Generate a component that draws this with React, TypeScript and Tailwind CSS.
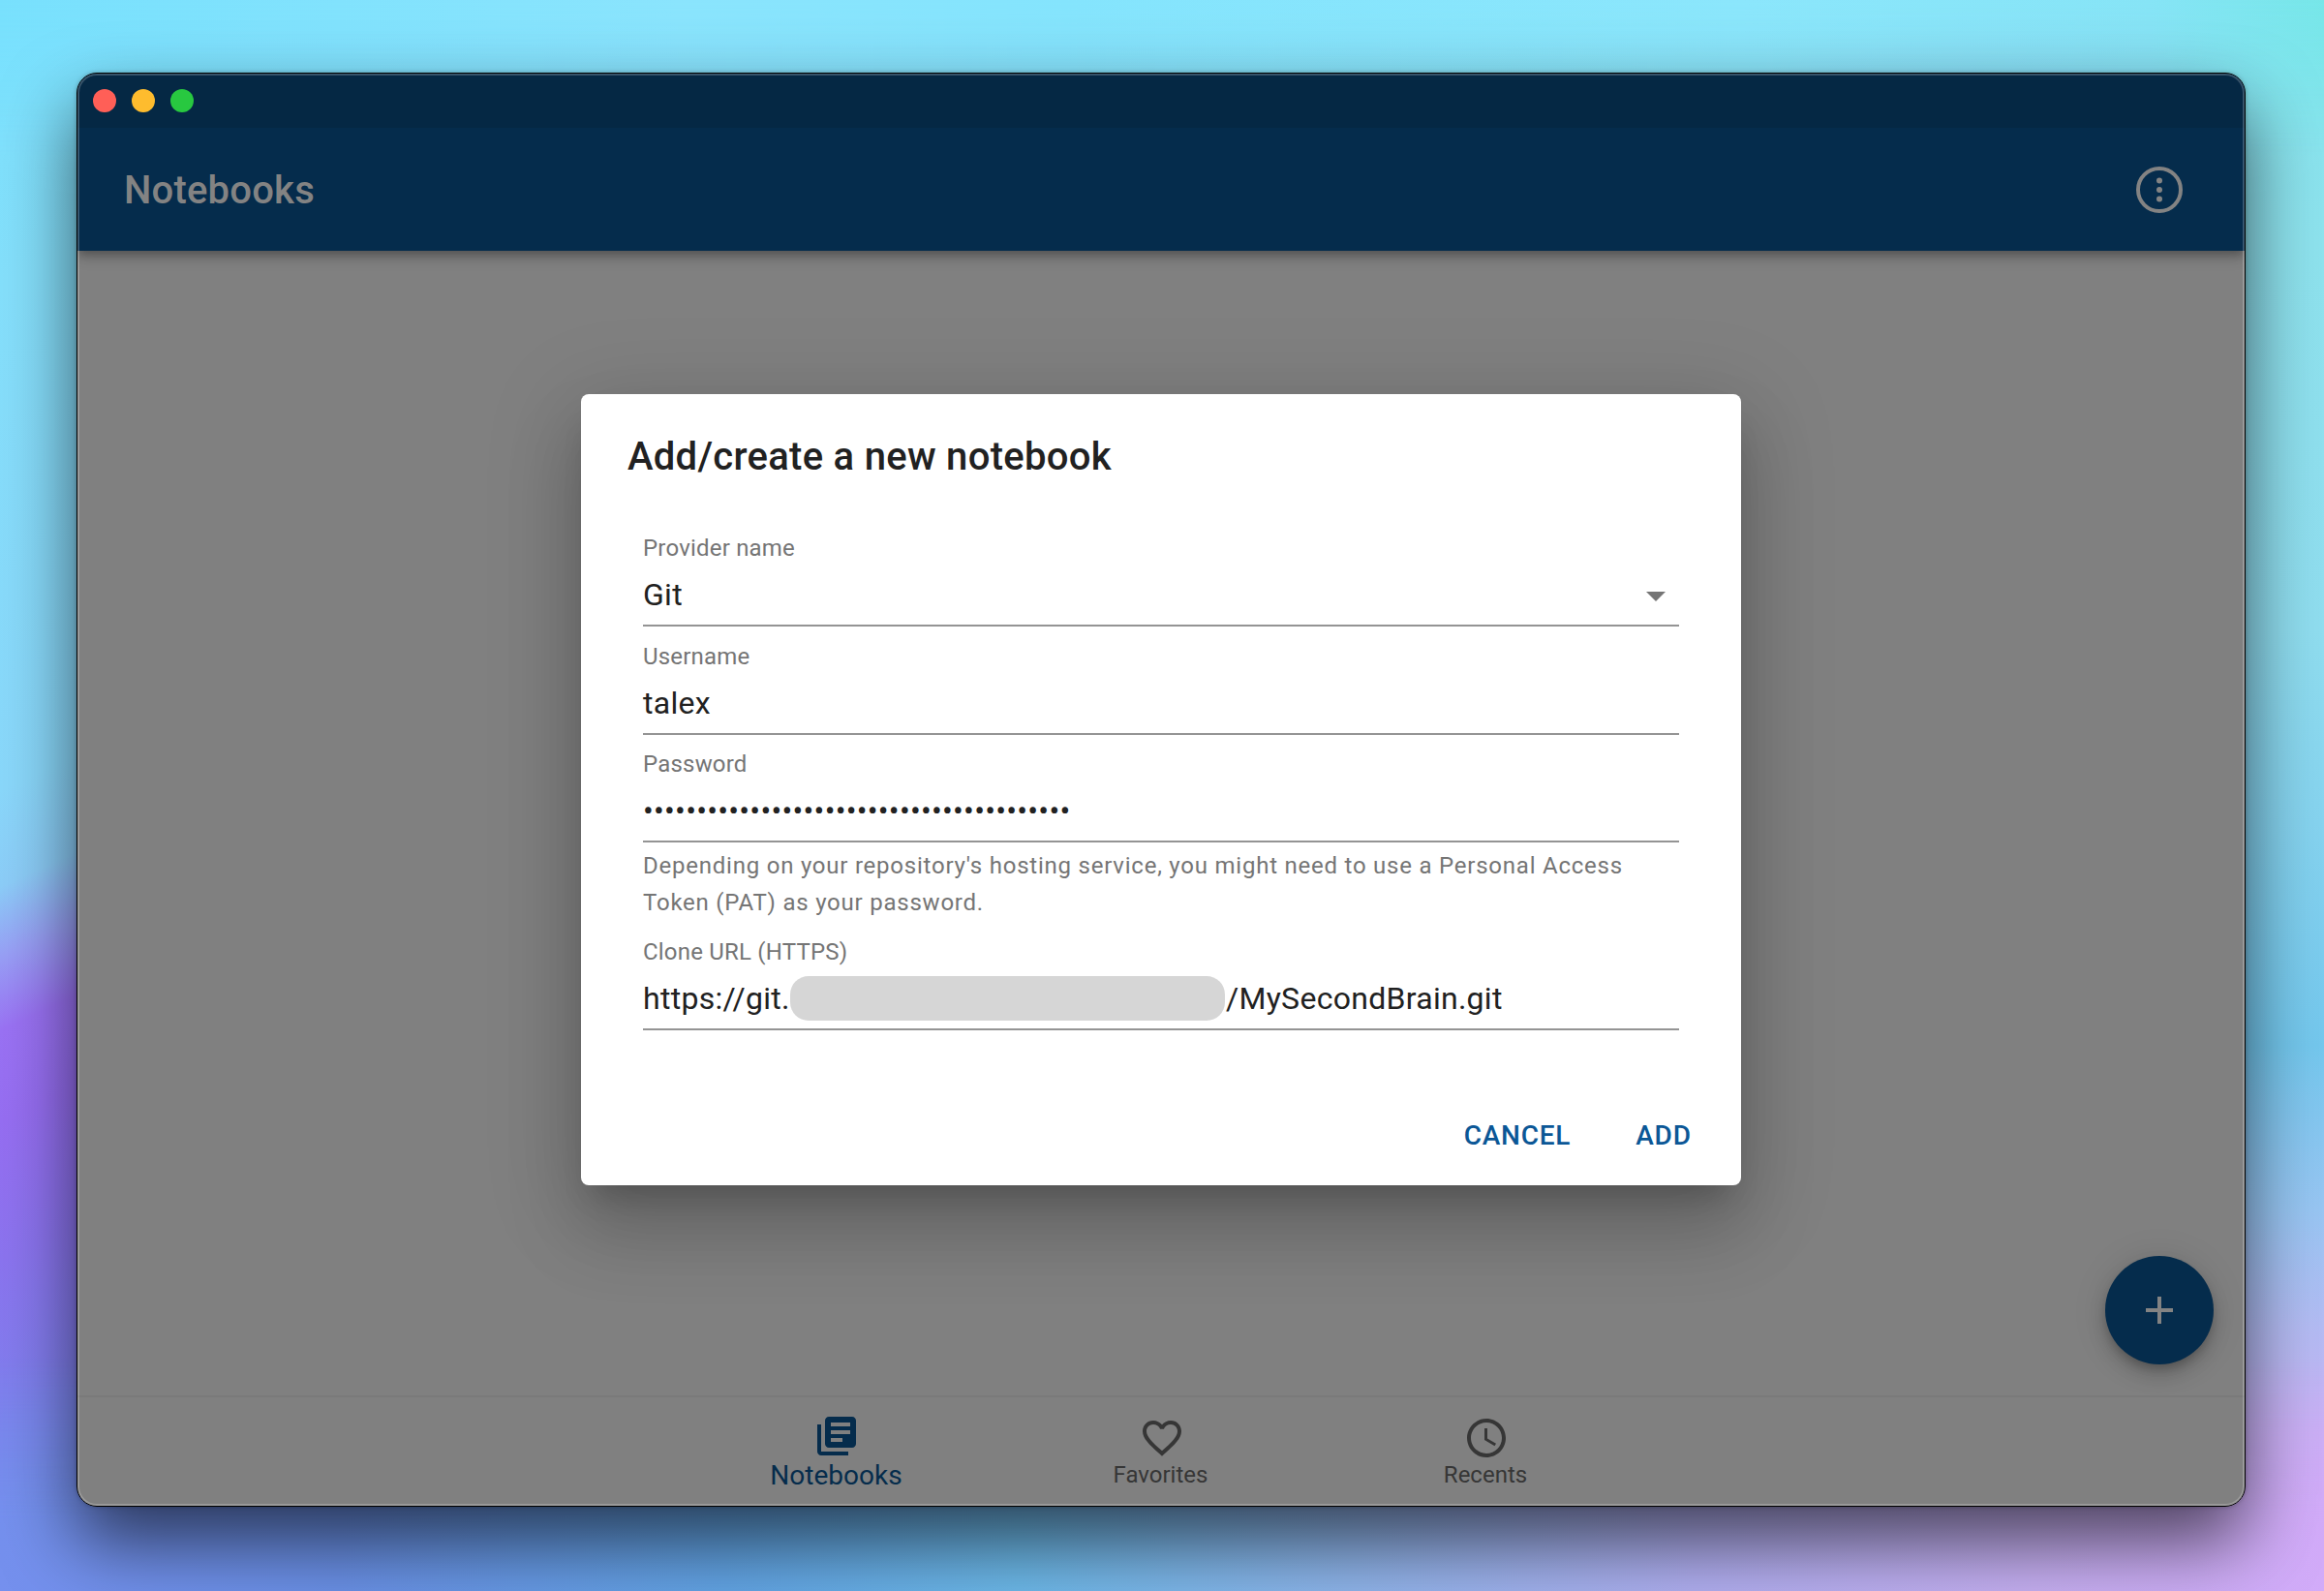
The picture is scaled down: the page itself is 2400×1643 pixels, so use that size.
import React from "react";

function Icon({ d, className }: { d: string; className: string }) {
  return (
    <svg viewBox="0 0 24 24" className={className} fill="currentColor">
      <path d={d} />
    </svg>
  );
}

const LIBRARY =
  "M4 6H2v14c0 1.1.9 2 2 2h14v-2H4V6zm16-4H8c-1.1 0-2 .9-2 2v12c0 1.1.9 2 2 2h12c1.1 0 2-.9 2-2V4c0-1.1-.9-2-2-2zm-1 9H9V9h10v2zm-4 4H9v-2h6v2zm4-8H9V5h10v2z";
const HEART =
  "M16.5 3c-1.74 0-3.41.81-4.5 2.09C10.91 3.81 9.24 3 7.5 3 4.42 3 2 5.42 2 8.5c0 3.78 3.4 6.86 8.55 11.54L12 21.35l1.45-1.32C18.6 15.36 22 12.28 22 8.5 22 5.42 19.58 3 16.5 3zm-4.4 15.55l-.1.1-.1-.1C7.14 14.24 4 11.39 4 8.5 4 6.5 5.5 5 7.5 5c1.54 0 3.04.99 3.57 2.36h1.87C13.46 5.99 14.96 5 16.5 5c2 0 3.5 1.5 3.5 3.5 0 2.89-3.14 5.74-7.9 10.05z";
const CLOCK =
  "M11.99 2C6.47 2 2 6.48 2 12s4.47 10 9.99 10C17.52 22 22 17.52 22 12S17.52 2 11.99 2zM12 20c-4.42 0-8-3.58-8-8s3.58-8 8-8 8 3.58 8 8-3.58 8-8 8zm.5-13H11v6l5.25 3.15.75-1.23-4.5-2.67z";

function Wallpaper() {
  return (
    <div className="absolute inset-0 bg-[linear-gradient(to_bottom,#84e5ee_0px,#8ee3ee_250px,#90def0_650px,#86d4f0_850px,#74c8ee_1080px,#98c6f3_1250px,#b4bcf4_1370px,#c6b3f4_1480px,#d0acf7_1643px)]">
      <div className="absolute inset-0 bg-[linear-gradient(155deg,#7be2fe_0px,#85e0fc_270px,#8ad8fb_740px,#8ccdf8_830px,#98a0f6_895px,#9a72f4_965px,#966ef2_1050px,#8b74ef_1180px,#7f80ee_1330px,#7590ee_1480px)] [mask-image:linear-gradient(to_right,black_0px,black_500px,transparent_2350px)]" />
      <div className="absolute inset-x-0 top-0 h-[160px] bg-[linear-gradient(to_right,#78e0fd_0px,#8ae4fd_700px,#84e4fd_1100px,#8be6fc_1800px,#86e4f6_2220px,#76e6e8_2400px)] [mask-image:linear-gradient(to_bottom,black,transparent)]" />
      <div className="absolute inset-x-0 bottom-0 h-[240px] bg-[linear-gradient(to_right,#7590ee_0px,#6a90e6_350px,#62a4e4_750px,#6cb8e8_1050px,#8fb4ea_1400px,#b0aef0_1750px,#c6aff2_2100px,#d2abf9_2400px)] [mask-image:linear-gradient(to_top,black,black_70px,transparent)]" />
    </div>
  );
}

function Field({
  label,
  children,
  className,
}: {
  label: string;
  children: React.ReactNode;
  className?: string;
}) {
  return (
    <div
      className={`flex h-24 flex-col border-b-2 border-[#949494] ${className ?? ""}`}
    >
      <div className="h-10 pt-px text-[24px] leading-7 tracking-[0.2px] text-[#757575]">
        {label}
      </div>
      <div className="flex h-[46px] items-center text-[32px] leading-[46px] tracking-[0.28px] text-[#212121]">
        {children}
      </div>
    </div>
  );
}

function Dialog() {
  return (
    <div className="flex h-[817px] w-[1198px] flex-col rounded-[8px] bg-white shadow-[0_22px_30px_-14px_rgba(0,0,0,0.2),0_48px_76px_6px_rgba(0,0,0,0.14),0_18px_92px_16px_rgba(0,0,0,0.12)]">
      <h2 className="px-12 pt-[33px] pb-[31px] text-[40px] leading-[64px] font-medium tracking-[0.28px] text-[#212121]">
        Add/create a new notebook
      </h2>
      <div className="flex flex-1 flex-col px-16 pt-4">
        <Field label="Provider name">
          <span className="flex-1">Git</span>
          <Icon d="M7 10l5 5 5-5z" className="mt-[2px] size-12 text-[#757575]" />
        </Field>
        <Field label="Username" className="mt-4">
          talex
        </Field>
        <Field label="Password" className="mt-[15px]">
          <span className="tracking-[0.24px]">{"•".repeat(40)}</span>
        </Field>
        <p className="mt-[5px] text-[24px] leading-[38px] tracking-[0.77px] text-[#757575]">
          Depending on your repository's hosting service, you might need to use a
          Personal Access Token (PAT) as your password.
        </p>
        <Field label="Clone URL (HTTPS)" className="mt-[17px]">
          <span className="w-[152px]">https://git.</span>
          <span className="h-[46px] w-[449px] rounded-[19px] bg-[#d6d6d6]" />
          <span className="pl-px">/MySecondBrain.git</span>
        </Field>
      </div>
      <div className="flex justify-end gap-4 p-4 text-[28px] leading-[49px] font-medium tracking-[0.76px] text-[#0b5796]">
        <button className="w-[142px] pt-[13px] pb-[11px]">CANCEL</button>
        <button className="w-32 pt-[13px] pb-[11px]">ADD</button>
      </div>
    </div>
  );
}

export default function App() {
  return (
    <div className="relative h-[1643px] w-[2400px] overflow-hidden font-['Roboto',sans-serif]">
      <Wallpaper />
      <div className="pointer-events-none absolute top-[75px] left-[79px] h-[1481px] w-[2240px] rounded-[21px] shadow-[0_0_4px_rgba(0,0,0,0.25),0_36px_76px_rgba(0,0,0,0.62)]" />
      <div className="relative mt-[75px] ml-[79px] flex h-[1481px] w-[2240px] flex-col overflow-hidden rounded-[21px] border border-black bg-[#808080]">
        <div className="z-10 bg-[#052c4c] shadow-[0_4px_8px_-2px_rgba(0,0,0,0.2),0_8px_10px_0_rgba(0,0,0,0.14),0_2px_20px_0_rgba(0,0,0,0.12)]">
          <div className="flex h-14 items-center gap-4 bg-[#052844] pl-4">
            <span className="size-6 rounded-full bg-[#ff5f57]" />
            <span className="size-6 rounded-full bg-[#febc2e]" />
            <span className="size-6 rounded-full bg-[#28c840]" />
          </div>
          <header className="flex h-[127px] items-center justify-between pr-16 pl-12 text-[#838383]">
            <h1 className="pt-[2px] text-[40px] leading-[64px] font-medium tracking-[0.2px]">
              Notebooks
            </h1>
            <svg viewBox="0 0 48 48" className="size-12">
              <circle cx="24" cy="24" r="22" fill="none" stroke="currentColor" strokeWidth="4" />
              <circle cx="24" cy="14.5" r="3" fill="currentColor" />
              <circle cx="24" cy="24" r="3" fill="currentColor" />
              <circle cx="24" cy="33.5" r="3" fill="currentColor" />
            </svg>
          </header>
        </div>
        <main className="flex flex-1 items-end justify-end pr-8 pb-8">
          <button className="flex size-28 items-center justify-center rounded-full bg-[#052c4c] text-[#838383] shadow-[0_6px_10px_-2px_rgba(0,0,0,0.2),0_12px_20px_0_rgba(0,0,0,0.14),0_2px_36px_0_rgba(0,0,0,0.12)]">
            <Icon d="M19 13h-6v6h-2v-6H5v-2h6V5h2v6h6v2z" className="size-12" />
          </button>
        </main>
        <nav className="flex h-[114px] justify-center border-t-2 border-[#7a7a7a] pl-px text-[#363636]">
          <div className="flex w-[335.5px] flex-col items-center pt-4 text-[#052c4c]">
            <Icon d={LIBRARY} className="size-12" />
            <span className="pt-px pr-px text-[28px] leading-8">Notebooks</span>
          </div>
          <div className="flex w-[335.5px] flex-col items-center pt-[18px]">
            <Icon d={HEART} className="size-12" />
            <span className="pr-[2px] text-[24px] leading-7">Favorites</span>
          </div>
          <div className="flex w-[335.5px] flex-col items-center pt-[18px]">
            <Icon d={CLOCK} className="size-12" />
            <span className="pr-[2px] text-[24px] leading-7">Recents</span>
          </div>
        </nav>
        <div className="absolute inset-0 z-20 flex items-center justify-center rounded-[20px] shadow-[inset_0_0_0_2px_rgba(255,255,255,0.2)]">
          <Dialog />
        </div>
      </div>
    </div>
  );
}
